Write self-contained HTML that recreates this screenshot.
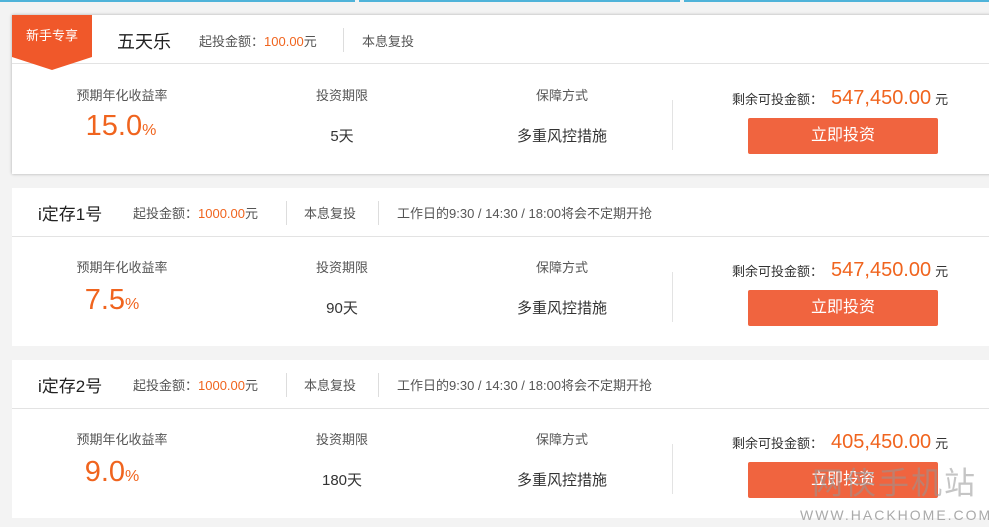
<!DOCTYPE html><html><head><meta charset="utf-8"><style>
*{margin:0;padding:0;box-sizing:border-box}
body{width:989px;height:527px;background:#f3f3f3;font-family:"Liberation Sans","Noto Sans CJK SC",sans-serif;position:relative;overflow:hidden;color:#333}
.top{position:absolute;left:0;top:0;width:989px;height:2px;background:#4fb3d9}
.top i{position:absolute;top:0;width:4px;height:2px;background:#f3f3f3}
.card{position:absolute;left:12px;width:990px;background:#fff}
.c1{top:15px;height:159px;box-shadow:0 0 3px rgba(0,0,0,.3)}
.hd{position:absolute;left:0;top:0;right:0;height:49px;border-bottom:1px solid #e3e3e3}
.t{position:absolute;font-size:13px;color:#555;white-space:nowrap}
.o{color:#f0641e}
.vd{position:absolute;top:13px;width:1px;height:24px;background:#ddd}
.lbl{position:absolute;font-size:13px;color:#555;white-space:nowrap;transform:translateX(-50%)}
.big{position:absolute;font-size:29px;color:#f0641e;white-space:nowrap;transform:translateX(-50%)}
.big small{font-size:16px}
.val{position:absolute;font-size:15px;color:#333;white-space:nowrap;transform:translateX(-50%)}
.sep{position:absolute;left:660px;width:1px;height:50px;background:#e3e3e3}
.rem{position:absolute;left:720px;font-size:13px;color:#333;white-space:nowrap}
.rem b{font-weight:normal;font-size:20px;color:#f0641e;margin:0 4px 0 8px}
.btn{position:absolute;left:736px;width:190px;height:36px;background:#f0643f;border-radius:2px;color:#fff;font-size:16px;text-align:center;line-height:36px}
.badge{position:absolute;left:0;top:0;width:80px;height:42px;background:#f0582a;color:#fff;font-size:13px;text-align:center;line-height:42px}
.badge:after{content:"";position:absolute;left:0;top:42px;border-left:40px solid transparent;border-right:40px solid transparent;border-top:13px solid #f0582a}
.wm{position:absolute;left:800px;top:507px;font-size:14px;color:#aaa;letter-spacing:2px}
.wm2{position:absolute;left:812px;top:458px;font-size:31px;color:rgba(150,150,150,.55);letter-spacing:2px}
</style></head><body>
<div class="top"><i style="left:355px"></i><i style="left:680px"></i></div>

<div class="card c1">
<div class="hd">
<div class="badge">新手专享</div>
<div class="t" style="left:105px;top:13px;font-size:18px;color:#222">五天乐</div>
<div class="t" style="left:187px;top:16px">起投金额：<span class="o">100.00</span>元</div>
<div class="vd" style="left:331px"></div>
<div class="t" style="left:350px;top:16px">本息复投</div>
</div>
<div class="lbl" style="left:110px;top:70px">预期年化收益率</div>
<div class="big" style="left:109px;top:95px">15.0<small>%</small></div>
<div class="lbl" style="left:330px;top:70px">投资期限</div>
<div class="val" style="left:330px;top:110px">5天</div>
<div class="lbl" style="left:550px;top:70px">保障方式</div>
<div class="val" style="left:550px;top:110px">多重风控措施</div>
<div class="sep" style="top:85px"></div>
<div class="rem" style="top:72px">剩余可投金额：<b>547,450.00</b>元</div>
<div class="btn" style="top:103px">立即投资</div>
</div>

<div class="card" style="top:188px;height:158px">
<div class="hd" style="height:49px">
<div class="t" style="left:26px;top:12px;font-size:17px;color:#222">i定存1号</div>
<div class="t" style="left:121px;top:15px">起投金额：<span class="o">1000.00</span>元</div>
<div class="vd" style="left:274px"></div>
<div class="t" style="left:292px;top:15px">本息复投</div>
<div class="vd" style="left:366px"></div>
<div class="t" style="left:385px;top:15px">工作日的9:30 / 14:30 / 18:00将会不定期开抢</div>
</div>
<div class="lbl" style="left:110px;top:69px">预期年化收益率</div>
<div class="big" style="left:100px;top:96px">7.5<small>%</small></div>
<div class="lbl" style="left:330px;top:69px">投资期限</div>
<div class="val" style="left:330px;top:109px">90天</div>
<div class="lbl" style="left:550px;top:69px">保障方式</div>
<div class="val" style="left:550px;top:109px">多重风控措施</div>
<div class="sep" style="top:84px"></div>
<div class="rem" style="top:71px">剩余可投金额：<b>547,450.00</b>元</div>
<div class="btn" style="top:102px">立即投资</div>
</div>

<div class="card" style="top:360px;height:158px">
<div class="hd" style="height:49px">
<div class="t" style="left:26px;top:12px;font-size:17px;color:#222">i定存2号</div>
<div class="t" style="left:121px;top:15px">起投金额：<span class="o">1000.00</span>元</div>
<div class="vd" style="left:274px"></div>
<div class="t" style="left:292px;top:15px">本息复投</div>
<div class="vd" style="left:366px"></div>
<div class="t" style="left:385px;top:15px">工作日的9:30 / 14:30 / 18:00将会不定期开抢</div>
</div>
<div class="lbl" style="left:110px;top:69px">预期年化收益率</div>
<div class="big" style="left:100px;top:96px">9.0<small>%</small></div>
<div class="lbl" style="left:330px;top:69px">投资期限</div>
<div class="val" style="left:330px;top:109px">180天</div>
<div class="lbl" style="left:550px;top:69px">保障方式</div>
<div class="val" style="left:550px;top:109px">多重风控措施</div>
<div class="sep" style="top:84px"></div>
<div class="rem" style="top:71px">剩余可投金额：<b>405,450.00</b>元</div>
<div class="btn" style="top:102px">立即投资</div>
</div>
<div class="wm2">网侠手机站</div>
<div class="wm">WWW.HACKHOME.COM</div>
</body></html>
